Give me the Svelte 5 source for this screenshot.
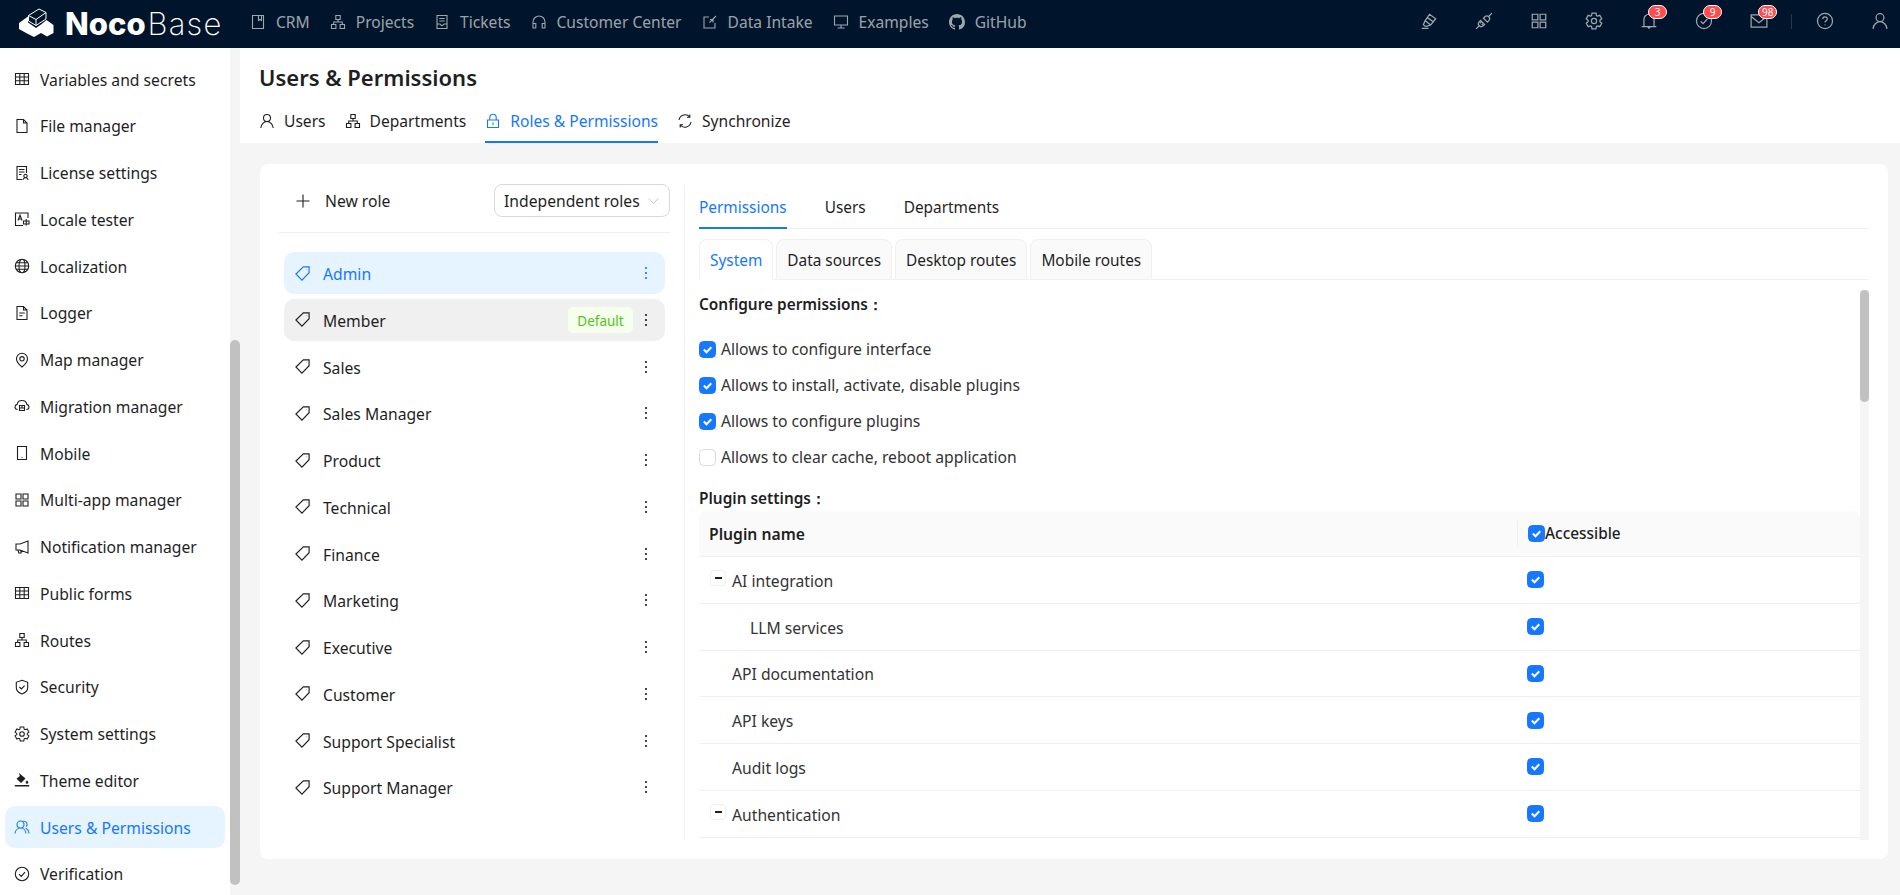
<script>
  // stroked icons drawn on a 16x16 grid
  const gearPath = (() => {
    let d = '';
    for (let i = 0; i < 6; i++) {
      const a = (i * Math.PI) / 3 - Math.PI / 2;
      const pt = (r, o) => `${(8 + r * Math.cos(a + o)).toFixed(2)} ${(8 + r * Math.sin(a + o)).toFixed(2)}`;
      d += `${i ? 'L' : 'M'}${pt(5.3, -0.42)}L${pt(7.2, -0.25)}L${pt(7.2, 0.25)}L${pt(5.3, 0.42)}`;
    }
    return d + 'Z M10.3 8a2.3 2.3 0 1 1-4.6 0a2.3 2.3 0 1 1 4.6 0Z';
  })();

  const icons = {
    table: 'M1.5 2.5h13v11h-13z M1.5 6h13 M1.5 9.75h13 M5.8 2.5v11 M10.2 2.5v11',
    file: 'M3 1.5h6.5L13 5v9.5H3z M9.5 1.5V5H13',
    license: 'M8 14.5H3V1.5h9.5V8 M5 4.5h5.5 M5 7h5.5 M5 9.5h2.5 M13.2 11a1.7 1.7 0 1 1-3.4 0a1.7 1.7 0 1 1 3.4 0z M8.8 15c.3-1.4 1.3-2.2 2.7-2.2s2.4.8 2.7 2.2',
    locale: 'M14 7V2H1.5v12.5H9 M4 9.5l2-5.5l2 5.5 M4.8 8h2.4 M9.5 10h5.5v3H9.5z M12.2 8v6.5',
    globe: 'M14.7 8a6.7 6.7 0 1 1-13.4 0a6.7 6.7 0 1 1 13.4 0z M11 8c0 3.7-1.3 6.7-3 6.7S5 11.7 5 8s1.3-6.7 3-6.7s3 3 3 6.7z M1.3 8h13.4 M2.2 4.8h11.6 M2.2 11.2h11.6',
    logger: 'M3 1.5h6.5L13 5v9.5H3z M9.5 1.5V5H13 M5.2 8h5.6 M5.2 10.8h3.4',
    map: 'M8 15C5.2 12.8 2.5 10.3 2.5 6.8a5.5 5.5 0 0 1 11 0c0 3.5-2.7 6-5.5 8.2z M10.2 6.8a2.2 2.2 0 1 1-4.4 0a2.2 2.2 0 1 1 4.4 0z',
    migration: 'M3.6 11.5C2 11.3 1 10.2 1 8.9c0-1.2.9-2.2 2.2-2.5C3.5 4 5.5 2.5 8 2.5s4.5 1.5 4.8 3.9c1.3.3 2.2 1.3 2.2 2.5c0 1.3-1 2.4-2.6 2.6 M5.5 7.5h5v5h-5z M5.5 10h5 M8 7.5V10',
    mobile: 'M3.5 1.5h9v13h-9z M8 12.3v.6',
    apps: 'M2 2h5v5H2z M9 2h5v5H9z M2 9h5v5H2z M9 9h5v5H9z',
    notify: 'M14 2v12L6 11H2V5h4z M4 11l.8 3h2.4L6.8 11.6',
    org: 'M5.8 1.5h4.4v4H5.8z M1.5 10.5h4.4v4H1.5z M10.1 10.5h4.4v4h-4.4z M8 5.5v2.5 M3.7 10.5V8h8.6v2.5',
    shield: 'M8 1.3l5.7 2v5.4c0 3-2.5 5-5.7 6.2c-3.2-1.2-5.7-3.2-5.7-6.2V3.3z M5.4 8l2 2l3.2-3.4',
    gear: gearPath,
    users: 'M10 5.5a3.5 3.5 0 1 1-7 0a3.5 3.5 0 1 1 7 0z M1 14.5c.3-3 2.6-5.5 5.5-5.5s5.2 2.5 5.5 5.5 M9.5 2.3a3.2 3.2 0 0 1 2.8 5.3 M11.5 9.3c2 .8 3.3 2.7 3.5 5.2',
    check: 'M14.7 8a6.7 6.7 0 1 1-13.4 0a6.7 6.7 0 1 1 13.4 0z M5 8.2l2.2 2.2l3.8-4.2',
    tag: 'M8.8 1.8h5.4v5.4L7.5 14.2L1.8 8.5z M11.9 4.1v.1',
    plus: 'M8 1.5v13 M1.5 8h13',
    user: 'M11.5 5a3.5 3.5 0 1 1-7 0a3.5 3.5 0 1 1 7 0z M1.8 15c.3-3.4 3-6.5 6.2-6.5s5.9 3.1 6.2 6.5',
    lock: 'M2.5 7h11v7.5h-11z M4.8 7V4.5a3.2 3.2 0 0 1 6.4 0V7 M8 9.5v2.5',
    sync: 'M2 7a6.2 6.2 0 0 1 10.8-3 M14 9a6.2 6.2 0 0 1-10.8 3 M12.8 1.5V4.3H10 M3.2 14.5V11.7H6',
    chevron: 'M2 5.5l6 6l6-6',
    book: 'M2.5 1.5h11v13h-11z M8.5 1.5v5l1.5-1l1.5 1v-5',
    ticket: 'M3 1.5h10v13H3z M5.3 4.5h5.4 M5.3 7h5.4 M3 10h3l2 1.8L10 10h3',
    headset: 'M2 11V8a6 6 0 0 1 12 0v3 M2 9.5h2.8v4.5H2z M11.2 9.5H14v4.5h-2.8z',
    form: 'M13 9v5H2V3h5 M7.5 8.5L14 2 M11 8.5V5.5H8',
    desktop: 'M1.5 2h13v9h-13z M8 11v3 M4.5 14h7',
    highlight: 'M1.5 14.5h6 M4 12.3l-1-1l1.5-3.5L8.5 2l5.5 4l-4.5 5.5l-3.5 1.3z M4.7 7.8l4.8 3.7 M6.5 5l5 3.5',
    plug: 'M1 15l2.5-2.5 M15 1l-2.5 2.5 M5 7.5l3.5 3.5l-1.5 1.5a2.5 2.5 0 0 1-3.5-3.5z M7.5 5.5L11 9l1.5-1.5a2.5 2.5 0 0 0-3.5-3.5z M4.5 10l1-1 M6 11.5l1-1',
    bell: 'M1.5 13h13 M3.5 13V6.5a4.5 4.5 0 0 1 9 0V13 M7 13.2l1 1.3l1-1.3 M8 1v1',
    mail: 'M1 2.5h14v11H1z M1 4L8 9.5L15 4',
    question: 'M14.7 8a6.7 6.7 0 1 1-13.4 0a6.7 6.7 0 1 1 13.4 0z M6 6.3c0-1.1.9-1.9 2-1.9s2 .8 2 1.8c0 1.7-2 1.5-2 3.2 M8 11.2v.5',
  };

  const github = 'M8 0C3.58 0 0 3.58 0 8c0 3.54 2.29 6.53 5.47 7.59.4.07.55-.17.55-.38 0-.19-.01-.82-.01-1.49-2.01.37-2.53-.49-2.69-.94-.09-.23-.48-.94-.82-1.13-.28-.15-.68-.52-.01-.53.63-.01 1.08.58 1.23.82.72 1.21 1.87.87 2.33.66.07-.52.28-.87.51-1.07-1.78-.2-3.64-.89-3.64-3.95 0-.87.31-1.59.82-2.15-.08-.2-.36-1.02.08-2.12 0 0 .67-.21 2.2.82.64-.18 1.32-.27 2-.27.68 0 1.36.09 2 .27 1.53-1.04 2.2-.82 2.2-.82.44 1.1.16 1.92.08 2.12.51.56.82 1.27.82 2.15 0 3.07-1.87 3.75-3.65 3.95.29.25.54.73.54 1.48 0 1.07-.01 1.93-.01 2.2 0 .21.15.46.55.38A8.013 8.013 0 0016 8c0-4.42-3.58-8-8-8z';

  const topNav = [
    ['book', 'CRM'], ['org', 'Projects'], ['ticket', 'Tickets'], ['headset', 'Customer Center'],
    ['form', 'Data Intake'], ['desktop', 'Examples'], ['github', 'GitHub'],
  ];

  const topTools = [
    { icon: 'highlight' }, { icon: 'plug' }, { icon: 'apps' }, { icon: 'gear' },
    { icon: 'bell', badge: '3' }, { icon: 'check', badge: '9' }, { icon: 'mail', badge: '98' },
  ];

  const sideItems = [
    ['table', 'Variables and secrets'], ['file', 'File manager'], ['license', 'License settings'],
    ['locale', 'Locale tester'], ['globe', 'Localization'], ['logger', 'Logger'], ['map', 'Map manager'],
    ['migration', 'Migration manager'], ['mobile', 'Mobile'], ['apps', 'Multi-app manager'],
    ['notify', 'Notification manager'], ['table', 'Public forms'], ['org', 'Routes'], ['shield', 'Security'],
    ['gear', 'System settings'], ['theme', 'Theme editor'], ['users', 'Users & Permissions'], ['check', 'Verification'],
  ];

  const pageTabs = [['user', 'Users'], ['org', 'Departments'], ['lock', 'Roles & Permissions'], ['sync', 'Synchronize']];

  const roles = ['Admin', 'Member', 'Sales', 'Sales Manager', 'Product', 'Technical', 'Finance', 'Marketing',
    'Executive', 'Customer', 'Support Specialist', 'Support Manager'];

  const configs = [
    ['Allows to configure interface', true],
    ['Allows to install, activate, disable plugins', true],
    ['Allows to configure plugins', true],
    ['Allows to clear cache, reboot application', false],
  ];

  const plugins = [
    { name: 'AI integration', toggle: true },
    { name: 'LLM services', child: true },
    { name: 'API documentation' },
    { name: 'API keys' },
    { name: 'Audit logs' },
    { name: 'Authentication', toggle: true },
  ];
</script>

{#snippet icon(name, size = 16)}
  {#if name === 'github'}
    <svg width={size} height={size} viewBox="0 0 16 16" fill="currentColor"><path d={github} /></svg>
  {:else if name === 'theme'}
    <svg width={size} height={size} viewBox="0 0 16 16" fill="currentColor">
      <path d="M5 1l6.5 5.5L7 11 2.5 6.8 5.8 4z M0.8 13h14.4v1.6H0.8z M13 8.2c.8 1 1.3 1.7 1.3 2.3a1.3 1.3 0 0 1-2.6 0c0-.6.5-1.3 1.3-2.3z" />
    </svg>
  {:else}
    <svg width={size} height={size} viewBox="0 0 16 16" fill="none" stroke="currentColor" stroke-width="1.1"><path d={icons[name]} /></svg>
  {/if}
{/snippet}

{#snippet box(on)}
  <span class="box" class:on>
    {#if on}
      <svg width="11" height="11" viewBox="0 0 11 11" fill="none" stroke="#fff" stroke-width="2"><path d="M1.8 5.5l2.7 2.7l4.8-5" /></svg>
    {/if}
  </span>
{/snippet}

{#snippet dots()}
  <svg class="dots" width="4" height="14" viewBox="0 0 4 14" fill="currentColor">
    <circle cx="2" cy="2" r="1.1" /><circle cx="2" cy="7" r="1.1" /><circle cx="2" cy="12" r="1.1" />
  </svg>
{/snippet}

<div class="app">
  <header class="topbar">
    <div class="logo">
      <svg width="35" height="29" viewBox="0 0 35 29">
        <path d="M0 15L9 8.5V14.5l8 5.5L22 16.5L27.5 12L34.5 17V25L28 28.5L22 25L15 29L8 25.5L0 21z" fill="#fff" />
        <path d="M9.5 7.5L20 1l7 3.5v6.5L17 17.5L9.5 13z M9.5 7.5L17 11.5L27 4.5 M17 11.5v6" fill="none" stroke="#fff" stroke-width="1" />
      </svg>
      <span class="logo-bold">Noco</span><span class="logo-thin">Base</span>
    </div>
    <nav class="topnav">
      {#each topNav as [ic, label]}
        <span class="topnav-item">{@render icon(ic)}{label}</span>
      {/each}
    </nav>
    <div class="tools">
      {#each topTools as t}
        <span class="tool">
          {@render icon(t.icon, 18)}
          {#if t.badge}<span class="badge">{t.badge}</span>{/if}
        </span>
      {/each}
      <span class="tool-sep"></span>
      <span class="tool">{@render icon('question', 18)}</span>
      <span class="tool">{@render icon('user', 18)}</span>
    </div>
  </header>

  <div class="body">
    <aside class="side">
      <ul class="side-list">
        {#each sideItems as [ic, label]}
          <li class="side-item" class:active={label === 'Users & Permissions'}>{@render icon(ic)}<span>{label}</span></li>
        {/each}
      </ul>
      <div class="side-scroll"><div class="side-thumb"></div></div>
    </aside>

    <main class="main">
      <section class="page-head">
        <h1>Users &amp; Permissions</h1>
        <div class="page-tabs">
          {#each pageTabs as [ic, label]}
            <span class="page-tab" class:active={label === 'Roles & Permissions'}>{@render icon(ic)}{label}</span>
          {/each}
        </div>
      </section>

      <section class="card">
        <div class="roles">
          <div class="roles-bar">
            <span class="new-role">{@render icon('plus')}<span>New role</span></span>
            <span class="select"><span>Independent roles</span><span class="chev">{@render icon('chevron', 13)}</span></span>
          </div>
          <ul class="role-list">
            {#each roles as role, i}
              <li class="role" class:active={i === 0} class:hover={i === 1}>
                {@render icon('tag', 17)}
                <span class="role-name">{role}</span>
                {#if i === 1}<span class="default-tag">Default</span>{/if}
                {@render dots()}
              </li>
            {/each}
          </ul>
        </div>

        <div class="detail">
          <div class="tabs">
            <span class="tab active">Permissions</span>
            <span class="tab">Users</span>
            <span class="tab">Departments</span>
          </div>
          <div class="subtabs">
            <span class="subtab active">System</span>
            <span class="subtab">Data sources</span>
            <span class="subtab">Desktop routes</span>
            <span class="subtab">Mobile routes</span>
          </div>
          <div class="pane">
            <div class="pane-body">
              <h4 class="first">Configure permissions：</h4>
              {#each configs as [label, on]}
                <div class="config">{@render box(on)}<span>{label}</span></div>
              {/each}
              <h4 class="second">Plugin settings：</h4>
              <div class="table">
                <div class="thead">
                  <div class="col-name"><span>Plugin name</span></div>
                  <div class="col-check">{@render box(true)}<span>Accessible</span></div>
                </div>
                {#each plugins as p}
                  <div class="row">
                    <div class="col-name" class:child={p.child}>
                      {#if p.toggle}<span class="toggle"></span>{/if}
                      <span>{p.name}</span>
                    </div>
                    <div class="col-check">{@render box(true)}</div>
                  </div>
                {/each}
              </div>
            </div>
            <div class="pane-scroll"><div class="pane-thumb"></div></div>
          </div>
        </div>
      </section>
    </main>
  </div>
</div>

<style>
  :global(body) {
    margin: 0;
    background: #f5f5f5;
    font-family: "Noto Sans", "Liberation Sans", sans-serif;
    font-size: 15.7px;
    color: #1f1f1f;
  }
  svg {
    flex: none;
    display: block;
  }
  ul {
    list-style: none;
    margin: 0;
    padding: 0;
  }
  .app {
    height: 895px;
    display: flex;
    flex-direction: column;
    overflow: hidden;
  }

  .topbar {
    height: 48px;
    flex: none;
    background: #00152b;
    display: flex;
    align-items: center;
    color: rgba(255, 255, 255, 0.62);
  }
  .logo {
    width: 250px;
    box-sizing: border-box;
    padding-left: 19px;
    display: flex;
    align-items: center;
    color: #fff;
    font-family: Inter, "Noto Sans", sans-serif;
    font-size: 31px;
    line-height: 40px;
  }
  .logo svg {
    margin-right: 11px;
    margin-top: -3px;
  }
  .logo-bold {
    font-weight: 800;
    margin-right: 2px;
  }
  .logo-thin {
    font-weight: 200;
    letter-spacing: 1.2px;
  }
  .topnav {
    display: flex;
    gap: 20px;
    margin-top: -5px;
    font-size: 15.6px;
  }
  .topnav-item {
    display: flex;
    align-items: center;
    gap: 10px;
  }
  .tools {
    margin-left: auto;
    display: flex;
    align-items: center;
    margin-right: -7px;
    margin-top: -6px;
  }
  .tool {
    width: 55px;
    display: flex;
    justify-content: center;
    position: relative;
  }
  .tool-sep {
    width: 1px;
    height: 15px;
    background: rgba(255, 255, 255, 0.15);
    margin: 0 5px 0 5px;
  }
  .badge {
    position: absolute;
    left: 27px;
    top: -7px;
    min-width: 11px;
    height: 12px;
    padding: 0 3px;
    border-radius: 7px;
    background: #ff4d4f;
    border: 1px solid #fff;
    color: #fff;
    font-size: 10px;
    line-height: 12px;
    text-align: center;
  }

  .body {
    flex: 1;
    display: flex;
    min-height: 0;
  }
  .side {
    width: 240px;
    flex: none;
    display: flex;
    background: #fff;
  }
  .side-list {
    width: 230px;
    padding-top: 10px;
  }
  .side-item {
    height: 42px;
    margin: 0 5px 4.75px;
    padding-left: 9px;
    display: flex;
    align-items: center;
    gap: 10px;
    border-radius: 10px;
  }
  .side-item span {
    margin-top: 1px;
  }
  .side-item.active {
    background: #e6f4ff;
    color: #1677ff;
  }
  .side-scroll {
    width: 10px;
    background: #f5f5f5;
    padding-top: 292px;
    padding-bottom: 8px;
  }
  .side-thumb {
    height: 545px;
    background: #c1c1c1;
    border-radius: 5px;
  }

  .main {
    flex: 1;
    min-width: 0;
    display: flex;
    flex-direction: column;
  }
  .page-head {
    height: 95px;
    flex: none;
    box-sizing: border-box;
    background: #fff;
    padding: 14px 0 0 19px;
  }
  h1 {
    margin: 0;
    font-size: 22px;
    line-height: 30px;
    font-weight: 600;
  }
  .page-tabs {
    display: flex;
    gap: 19px;
    margin-top: 13px;
    font-size: 15.6px;
  }
  .page-tab {
    height: 38px;
    box-sizing: border-box;
    display: flex;
    align-items: center;
    gap: 9px;
    border-bottom: 2px solid transparent;
    padding-bottom: 4px;
  }
  .page-tab.active {
    color: #1677ff;
    border-color: #1677ff;
  }

  .card {
    flex: 1;
    min-height: 0;
    margin: 21px 12px 36px 20px;
    padding: 20px 19px 19px;
    background: #fff;
    border-radius: 8px;
    display: flex;
  }
  .roles {
    width: 391px;
    flex: none;
    margin-right: 14px;
  }
  .roles-bar {
    height: 49px;
    box-sizing: border-box;
    padding: 0 0 15px 16px;
    border-bottom: 1px solid #f0f0f0;
    display: flex;
    align-items: center;
    justify-content: space-between;
  }
  .new-role {
    display: flex;
    align-items: center;
    gap: 14px;
  }
  .new-role span,
  .select span:first-child {
    margin-top: 1px;
  }
  .select {
    width: 176px;
    height: 33px;
    box-sizing: border-box;
    border: 1px solid #d9d9d9;
    border-radius: 8px;
    padding: 0 9px;
    display: flex;
    align-items: center;
    justify-content: space-between;
  }
  .chev {
    color: #bfbfbf;
  }
  .role-list {
    padding-top: 19px;
  }
  .role {
    height: 42px;
    width: 381px;
    box-sizing: border-box;
    margin: 0 0 4.75px 5px;
    padding: 0 17px 0 10px;
    display: flex;
    align-items: center;
    gap: 12px;
    border-radius: 10px;
  }
  .role.active {
    background: #e6f4ff;
    color: #1677ff;
  }
  .role.hover {
    background: #f0f0f0;
  }
  .role-name {
    flex: 1;
    margin-top: 2px;
  }
  .default-tag {
    width: 65px;
    height: 26px;
    margin-right: -1px;
    background: #f6ffed;
    border-radius: 5px;
    color: #52c41a;
    font-size: 13.5px;
    line-height: 28px;
    text-align: center;
  }

  .detail {
    flex: 1;
    min-width: 0;
    border-left: 1px solid #f0f0f0;
    padding-left: 14px;
    display: flex;
    flex-direction: column;
  }
  .tabs {
    height: 45px;
    flex: none;
    box-sizing: border-box;
    border-bottom: 1px solid #f0f0f0;
    display: flex;
    gap: 38px;
    font-size: 15.4px;
  }
  .tab {
    height: 45px;
    box-sizing: border-box;
    padding-top: 13px;
    line-height: 22px;
  }
  .tab.active {
    color: #1677ff;
    border-bottom: 2px solid #1677ff;
  }
  .subtabs {
    flex: none;
    height: 41px;
    margin-top: 10px;
    box-sizing: border-box;
    border-bottom: 1px solid #f0f0f0;
    display: flex;
    gap: 3px;
    font-size: 15.4px;
  }
  .subtab {
    height: 41px;
    box-sizing: border-box;
    padding: 0 10px;
    line-height: 41px;
    background: #fafafa;
    border: 1px solid #f0f0f0;
    border-radius: 8px 8px 0 0;
  }
  .subtab.active {
    color: #1677ff;
    background: #fff;
    border-bottom-color: #fff;
  }
  .pane {
    flex: 1;
    min-height: 0;
    display: flex;
  }
  .pane-body {
    flex: 1;
    min-width: 0;
    overflow: hidden;
    color: #333;
  }
  .pane-scroll {
    width: 9px;
    margin-top: 10px;
    background: #f5f5f5;
  }
  .pane-thumb {
    height: 112px;
    background: #c1c1c1;
    border-radius: 4.5px;
  }
  h4 {
    margin: 0;
    font-size: 15.4px;
    line-height: 22px;
    font-weight: 600;
    color: #1f1f1f;
  }
  h4.first {
    margin: 14px 0 15px;
  }
  h4.second {
    margin: 13px 0 1px;
  }
  .config {
    height: 36px;
    display: flex;
    align-items: center;
    gap: 5px;
  }
  .box {
    width: 17px;
    height: 17px;
    box-sizing: border-box;
    flex: none;
    border: 1px solid #d9d9d9;
    border-radius: 4.5px;
    background: #fff;
    display: flex;
    align-items: center;
    justify-content: center;
  }
  .box.on {
    border-color: #1677ff;
    background: #1677ff;
  }
  .thead,
  .row {
    display: flex;
    box-sizing: border-box;
    border-bottom: 1px solid #f0f0f0;
  }
  .thead {
    height: 46px;
    background: #fafafa;
    border-radius: 8px 8px 0 0;
    font-weight: 600;
    color: #1f1f1f;
  }
  .row {
    height: 46.75px;
  }
  .col-name {
    width: 818px;
    flex: none;
    box-sizing: border-box;
    padding-left: 33px;
    display: flex;
    align-items: center;
    position: relative;
  }
  .col-name span:not(.toggle) {
    margin-top: 2px;
  }
  .thead .col-name span {
    margin-top: 0;
  }
  .thead .col-name {
    padding-left: 10px;
  }
  .col-name.child {
    padding-left: 51px;
  }
  .col-check {
    flex: 1;
    padding-left: 10px;
    display: flex;
    align-items: center;
  }
  .thead .col-check {
    border-left: 1px solid #f0f0f0;
    margin: 10px 0;
    font-weight: 500;
    font-size: 15.4px;
  }
  .toggle {
    position: absolute;
    left: 11px;
    top: 13px;
    width: 16px;
    height: 16px;
    border-radius: 4px;
    border: 1px solid #f0f0f0;
    box-sizing: border-box;
  }
  .toggle::after {
    content: "";
    position: absolute;
    left: 3.5px;
    top: 6px;
    width: 7px;
    height: 2px;
    background: #1f1f1f;
  }
</style>
